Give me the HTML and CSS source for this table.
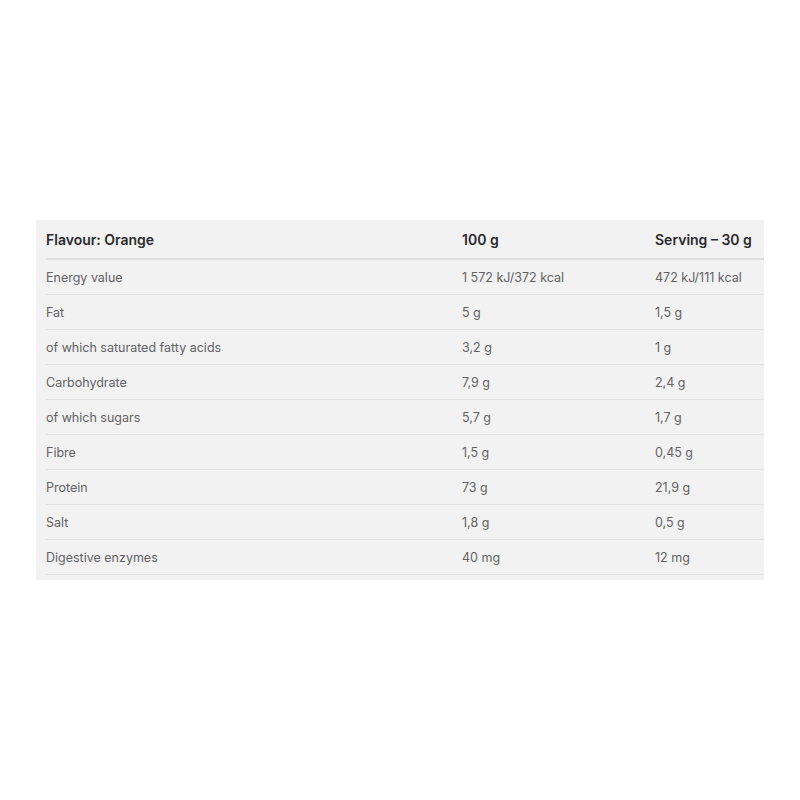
FILE: index.html
```html
<!DOCTYPE html>
<html>
<head>
<meta charset="utf-8">
<link rel="stylesheet" href="styles.css">
</head>
<body>
<div class="panel">
  <table class="nutri">
    <thead>
      <tr><th>Flavour: Orange</th><th>100 g</th><th>Serving – 30 g</th></tr>
    </thead>
    <tbody>
      <tr><td>Energy value</td><td>1 572 kJ/372 kcal</td><td>472 kJ/111 kcal</td></tr>
      <tr><td>Fat</td><td>5 g</td><td>1,5 g</td></tr>
      <tr><td>of which saturated fatty acids</td><td>3,2 g</td><td>1 g</td></tr>
      <tr><td>Carbohydrate</td><td>7,9 g</td><td>2,4 g</td></tr>
      <tr><td>of which sugars</td><td>5,7 g</td><td>1,7 g</td></tr>
      <tr><td>Fibre</td><td>1,5 g</td><td>0,45 g</td></tr>
      <tr><td>Protein</td><td>73 g</td><td>21,9 g</td></tr>
      <tr><td>Salt</td><td>1,8 g</td><td>0,5 g</td></tr>
      <tr><td>Digestive enzymes</td><td>40 mg</td><td>12 mg</td></tr>
    </tbody>
  </table>
</div>
</body>
</html>
```
FILE: styles.css
```css
html, body {
  margin: 0;
  padding: 0;
  background: #ffffff;
}
body {
  font-family: Inter, "Open Sans", sans-serif;
}
.panel {
  margin: 220px 36px 0 36px;
  width: 728px;
  background: #f2f2f2;
  padding: 0 0 5px 10px;
  box-sizing: border-box;
}
.nutri {
  width: 718px;
  border-collapse: collapse;
  table-layout: fixed;
}
.nutri th, .nutri td {
  text-align: left;
  padding: 0 0 0 10px;
  white-space: nowrap;
}
.nutri th:first-child, .nutri td:first-child {
  padding-left: 0;
  width: 406px;
}
.nutri th:nth-child(2), .nutri td:nth-child(2) {
  width: 193px;
}
.nutri th {
  height: 39px;
  font-size: 14px;
  font-weight: 600;
  color: #2a2a2e;
  border-bottom: 2px solid #e0e0e0;
  padding-top: 0;
  box-sizing: border-box;
}
.nutri td {
  height: 34px;
  font-size: 12.5px;
  font-weight: 400;
  color: #626265;
  border-bottom: 1px solid #e2e2e2;
}
```
